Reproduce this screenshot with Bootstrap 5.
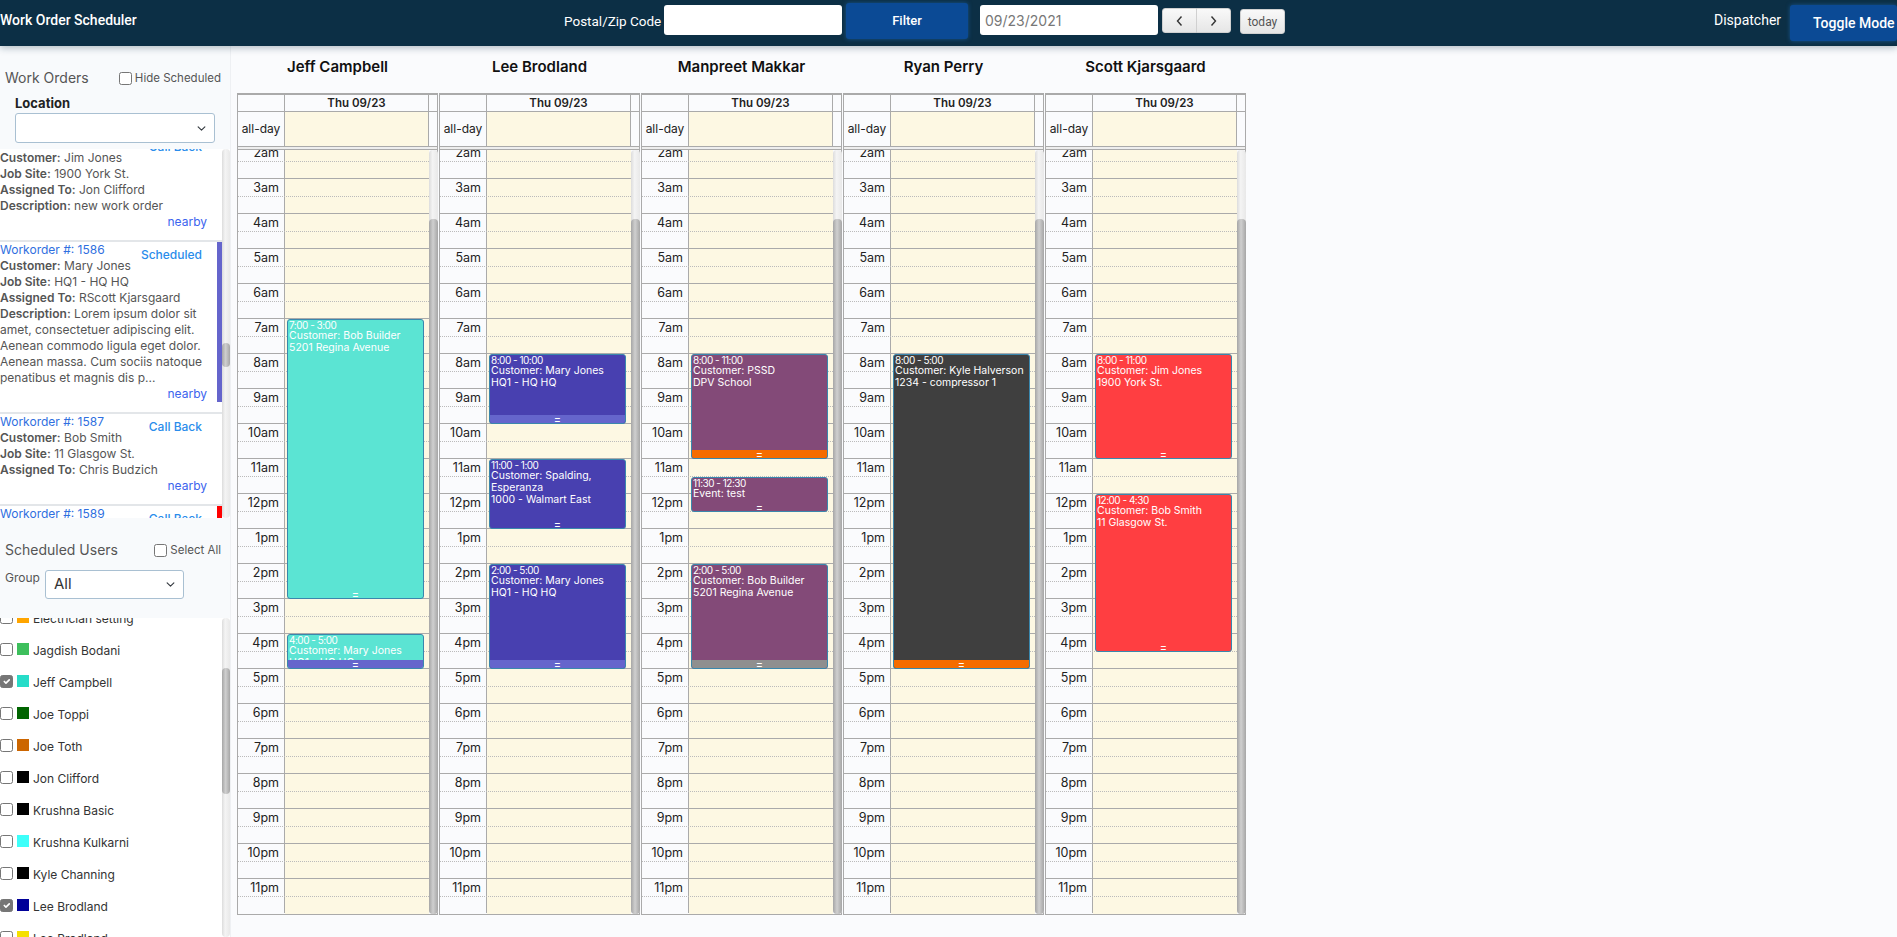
<!DOCTYPE html>
<html lang="en">
<head>
  <meta charset="UTF-8" />
  <title>Work Order Scheduler</title>
  <link href="https://cdn.jsdelivr.net/npm/bootstrap@5.3.2/dist/css/bootstrap.min.css" rel="stylesheet">
  <style>
    html, body { height: 100%; }
    body {
      background: #fafbfd;
      font-family: Inter, "Noto Sans", sans-serif;
      font-size: 12px;
      color: #555;
      overflow: hidden;
    }

    /* top bar */
    .top-bar {
      height: 46px;
      padding: 0;
      background: #0c2f45;
      color: #fff;
      font-family: Roboto, sans-serif;
      font-size: 13px;
      box-shadow: 0 2px 7px rgba(12, 47, 69, .3);
      position: relative;
      z-index: 5;
      flex-wrap: nowrap;
      justify-content: flex-start;
      align-items: flex-start;
    }
    .brand-box { width: 564px; padding-top: 12px; font-size: 14px; font-weight: 500; line-height: 16px; }
    .zip-label { width: 100px; padding-top: 13px; font-size: 13.5px; line-height: 16px; }
    .top-input {
      width: 178px; height: 30px; margin-top: 5px;
      border: 0; border-radius: 3px;
      font-family: Inter, sans-serif; font-size: 14px; color: #777;
      padding: 0 5px;
    }
    .blue-btn {
      background: #0b4a95; border: 0; border-radius: 3px; color: #fff;
      font-family: Roboto, sans-serif; font-size: 13px; font-weight: 500;
      box-shadow: 0 0 4px rgba(30, 110, 190, .6);
    }
    .blue-btn:hover { background: #0b4a95; }
    .filter-btn { width: 122px; height: 36px; margin: 3px 12px 0 4px; }
    .cal-nav { margin: 8px 9px 0 4px; }
    .cal-btn {
      height: 25px; padding: 0; color: #333; font-size: 12px;
      background: linear-gradient(#f9f9f9, #e6e6e6);
      border: 1px solid #d0d0d0; border-radius: 3px;
    }
    .cal-nav .cal-btn { width: 35px; }
    .today-btn { width: 45px; margin-top: 9px; font-family: Roboto, sans-serif; color: #555; }
    .dispatcher-box { margin-left: auto; padding-top: 12px; font-size: 14px; line-height: 16px; width: 76px; }
    .toggle-btn { width: 107px; height: 36px; margin-top: 5px; text-align: left; padding: 0 0 0 23px; font-size: 14px; }

    /* sidebar */
    .main-area { height: 891px; }
    .side-bar { width: 231px; flex: none; border-right: 1px solid #eef0f3; position: relative; }
    .side-panel { background: #f8fafc; }
    .orders-head { height: 103px; padding: 23px 5px 0; }
    .users-head { height: 100px; padding: 23px 5px 0; }
    .users-title { margin-bottom: 11px; }
    .panel-title { font-size: 14px; color: #555; line-height: 18px; }
    .check-label { font-size: 11.5px; color: #555; line-height: 14px; }
    .form-check-input.plain-check {
      width: 13px; height: 13px; margin: 0 3px 0 0; flex: none;
      border: 1px solid #767676; border-radius: 2.5px;
    }
    .form-check-input.plain-check:checked { background-color: #767676; border-color: #767676; }
    .location-label { font-weight: 700; font-size: 13px; color: #222; margin: 8px 0 2px 10px; line-height: 16px; }
    .form-select.side-select {
      border: 1px solid #a9c0d2; border-radius: 3px; background-color: #fff;
      background-size: 11px 9px; background-position: right 7px center;
      font-size: 15px; color: #333; padding: 0 0 0 8px;
    }
    .location-select { width: 200px; height: 30px; margin-left: 10px; }
    .group-select { width: 139px; height: 29px; }
    .group-label { font-size: 12px; width: 40px; margin-top: -1px; }

    .side-scroll { background: #fff; }
    .orders-list { height: 369px; }
    .users-list { height: 319px; }
    .scroll-view { flex: 1 1 auto; min-width: 0; overflow: hidden; }
    .scroll-track {
      flex: none; width: 8px;
      background: linear-gradient(90deg, #dcdcdc, #f4f4f4 40%, #e8e8e8);
      border-radius: 4px;
    }
    .scroll-thumb {
      background: linear-gradient(90deg, #a6a6a6, #cfcfcf 45%, #a6a6a6);
      border-radius: 4px;
    }
    .order-item { border-bottom: 2px solid #e3e6e9; padding-bottom: 10px; line-height: 16px; font-size: 12px; }
    .order-inner { border-right: 5px solid transparent; padding-right: 10px; position: relative; }
    .order-no { color: #2f6fe0; display: block; }
    .order-status { position: absolute; right: 15px; top: 5px; color: #2a8ceb; font-weight: 500; }
    .order-near { color: #3c64ee; text-align: right; display: block; }
    .user-row { height: 32px; display: flex; align-items: flex-start; font-size: 12px; color: #333; }
    .user-swatch { width: 12px; height: 12px; margin: 0 4px 0 1px; flex: none; }
    .user-name { line-height: 16px; }

    /* calendar */
    .cal-wrap { padding-left: 6px; gap: 1px; }
    .cal-col { width: 201px; flex: none; }
    .res-name { height: 47px; padding-top: 12px; line-height: 18px; text-align: center; font-weight: 600; font-size: 15px; color: #111; }
    .cal-frame { border-left: 1px solid #aaa; border-top: 2px solid #aaa; border-right: 1px solid #aaa; border-bottom: 1px solid #aaa; }
    .head-row { height: 17px; line-height: 16px; border-bottom: 1px solid #aaa; font-size: 11.5px; font-weight: 600; color: #222; }
    .allday-row { height: 34px; line-height: 33px; font-size: 12px; color: #222; }
    .axis-cell { width: 47px; flex: none; border-right: 1px solid #aaa; }
    .allday-row .axis-cell { text-align: center; }
    .day-cell { flex: 1 1 auto; border-right: 1px solid #aaa; text-align: center; }
    .gutter-cell { width: 8px; flex: none; }
    .cream-bg { background: #fdf8e3; }
    .head-sep { height: 4px; border-top: 1px solid #aaa; border-bottom: 1px solid #aaa; background: #eee; }
    .cal-scroll { height: 764px; }
    .cal-scroll .scroll-track { width: 9px; margin-right: -1px; }
    .cal-body { position: relative; padding-bottom: 1px; background: linear-gradient(90deg, transparent 47px, #fdf8e3 47px); }
    .hour-row { height: 35px; border-top: 1px solid #aaa; position: relative; display: flex; }
    .hour-row::after { content: ""; position: absolute; left: 0; right: 0; top: 17px; border-top: 1px dotted #bbb; }
    .hour-label { width: 47px; flex: none; border-right: 1px solid #aaa; text-align: right; padding: 1px 5px 0 0; font-size: 12.5px; line-height: 16px; color: #222; }
    .hour-fill { flex: 1 1 auto; }
    .cal-event {
      position: absolute; left: 49px; right: 5px;
      border: 1px solid #3a87ad; border-radius: 3px;
      color: #fff; font-size: 10.5px; line-height: 12px; overflow: hidden; z-index: 2;
    }
    .ev-time { font-size: 10px; letter-spacing: -.5px; line-height: 10px; padding-left: 1px; }
    .ev-line { padding-left: 1px; }
    .ev-handle {
      position: absolute; left: 0; right: 0; bottom: 0; height: 8px;
      text-align: center; font-size: 11px; line-height: 8px; color: #fff;
    }
  </style>
</head>
<body>

  <!-- TOP BAR -->
  <nav class="navbar top-bar">
    <div class="brand-box">Work Order Scheduler</div>
    <div class="zip-label">Postal/Zip Code</div>
    <input class="top-input" type="text">
    <button class="btn blue-btn filter-btn">Filter</button>
    <input class="top-input" type="text" value="09/23/2021">
    <div class="btn-group cal-nav">
      <button class="btn cal-btn" aria-label="prev"><svg width="9" height="12" viewBox="0 0 9 12"><path d="M6.500 1.500 2.500 6l4 4.500" fill="none" stroke="#333" stroke-width="1.400"/></svg></button>
      <button class="btn cal-btn" aria-label="next"><svg width="9" height="12" viewBox="0 0 9 12"><path d="M2.500 1.500 6.500 6l-4 4.500" fill="none" stroke="#333" stroke-width="1.400"/></svg></button>
    </div>
    <button class="btn cal-btn today-btn">today</button>
    <div class="dispatcher-box">Dispatcher</div>
    <button class="btn blue-btn toggle-btn">Toggle Mode</button>
  </nav>

  <div class="d-flex main-area">

    <!-- SIDEBAR -->
    <aside class="side-bar">
      <div class="side-panel orders-head">
        <div class="d-flex align-items-center justify-content-between">
          <span class="panel-title">Work Orders</span>
          <label class="d-flex align-items-center check-label me-1"><input class="form-check-input plain-check" type="checkbox">Hide Scheduled</label>
        </div>
        <div class="location-label">Location</div>
        <select class="form-select side-select location-select"><option></option></select>
      </div>
      <div class="d-flex side-scroll orders-list">
        <div class="scroll-view" id="ordersList"></div>
        <div class="scroll-track"><div class="scroll-thumb" style="margin-top:194px;height:24px"></div></div>
      </div>

      <div class="side-panel users-head">
        <div class="d-flex align-items-center justify-content-between users-title">
          <span class="panel-title">Scheduled Users</span>
          <label class="d-flex align-items-center check-label me-1"><input class="form-check-input plain-check" type="checkbox">Select All</label>
        </div>
        <div class="d-flex align-items-start">
          <span class="group-label">Group</span>
          <select class="form-select side-select group-select"><option>All</option></select>
        </div>
      </div>
      <div class="d-flex side-scroll users-list">
        <div class="scroll-view" id="usersList"></div>
        <div class="scroll-track"><div class="scroll-thumb" style="margin-top:50px;height:126px"></div></div>
      </div>
    </aside>

    <!-- CALENDAR COLUMNS -->
    <section class="d-flex cal-wrap" id="calWrap"></section>
  </div>

  <script src="https://cdn.jsdelivr.net/npm/bootstrap@5.3.2/dist/js/bootstrap.bundle.min.js"></script>
  <script>
    (() => {
      const orders = [
        { no: 1585, status: 'Call Back', lines: [['Customer', 'Jim Jones'], ['Job Site', '1900 York St.'], ['Assigned To', 'Jon Clifford'], ['Description', 'new work order']], bar: 'transparent' },
        { no: 1586, status: 'Scheduled', lines: [['Customer', 'Mary Jones'], ['Job Site', 'HQ1 - HQ HQ'], ['Assigned To', 'RScott Kjarsgaard'], ['Description', 'Lorem ipsum dolor sit amet, consectetuer adipiscing elit. Aenean commodo ligula eget dolor. Aenean massa. Cum sociis natoque penatibus et magnis dis p...']], bar: '#6565cc' },
        { no: 1587, status: 'Call Back', lines: [['Customer', 'Bob Smith'], ['Job Site', '11 Glasgow St.'], ['Assigned To', 'Chris Budzich']], bar: 'transparent' },
        { no: 1589, status: 'Call Back', lines: [['Customer', 'Bob Smith'], ['Job Site', '11 Glasgow St.']], bar: '#ff0000' }
      ];

      const users = [
        ['Electrician setting', '#ffa500', false], ['Jagdish Bodani', '#3dbf5c', false], ['Jeff Campbell', '#26dcc8', true],
        ['Joe Toppi', '#006400', false], ['Joe Toth', '#cc6600', false], ['Jon Clifford', '#000000', false],
        ['Krushna Basic', '#000000', false], ['Krushna Kulkarni', '#3dfffa', false], ['Kyle Channing', '#000000', false],
        ['Lee Brodland', '#000099', true], ['Lee Brodland', '#f5e000', false]
      ];

      const TEAL = '#5be4d3', PURPLE = '#4840b0', PLUM = '#834a78', DARK = '#3f3f3f', RED = '#ff3e41';
      const columns = [
        { name: 'Jeff Campbell', events: [
          { from: 7, to: 15, time: '7:00 - 3:00', lines: ['Customer: Bob Builder', '5201 Regina Avenue'], bg: TEAL },
          { from: 16, to: 17, time: '4:00 - 5:00', lines: ['Customer: Mary Jones', 'HQ1 - HQ HQ'], bg: TEAL, bar: '#6565cc' }
        ] },
        { name: 'Lee Brodland', events: [
          { from: 8, to: 10, time: '8:00 - 10:00', lines: ['Customer: Mary Jones', 'HQ1 - HQ HQ'], bg: PURPLE, bar: '#6565cc' },
          { from: 11, to: 13, time: '11:00 - 1:00', lines: ['Customer: Spalding, Esperanza', '1000 - Walmart East'], bg: PURPLE },
          { from: 14, to: 17, time: '2:00 - 5:00', lines: ['Customer: Mary Jones', 'HQ1 - HQ HQ'], bg: PURPLE, bar: '#6565cc' }
        ] },
        { name: 'Manpreet Makkar', events: [
          { from: 8, to: 11, time: '8:00 - 11:00', lines: ['Customer: PSSD', 'DPV School'], bg: PLUM, bar: '#f56c00' },
          { from: 11.5, to: 12.5, time: '11:30 - 12:30', lines: ['Event: test'], bg: PLUM },
          { from: 14, to: 17, time: '2:00 - 5:00', lines: ['Customer: Bob Builder', '5201 Regina Avenue'], bg: PLUM, bar: '#8f8f8f' }
        ] },
        { name: 'Ryan Perry', events: [
          { from: 8, to: 17, time: '8:00 - 5:00', lines: ['Customer: Kyle Halverson', '1234 - compressor 1'], bg: DARK, bar: '#f56c00' }
        ] },
        { name: 'Scott Kjarsgaard', events: [
          { from: 8, to: 11, time: '8:00 - 11:00', lines: ['Customer: Jim Jones', '1900 York St.'], bg: RED },
          { from: 12, to: 16.5, time: '12:00 - 4:30', lines: ['Customer: Bob Smith', '11 Glasgow St.'], bg: RED }
        ] }
      ];

      const hourName = h => (h % 12 || 12) + (h < 12 ? 'am' : 'pm');

      // the lists sit part way down in the picture, so scroll them there
      const ordersList = document.getElementById('ordersList');
      ordersList.innerHTML = '<div style="height:200px"></div>' + orders.map(o => `
        <div class="order-item">
          <div class="order-inner" style="border-right-color:${o.bar}">
            <span class="order-no">Workorder #: ${o.no}</span>
            <span class="order-status">${o.status}</span>
            ${o.lines.map(l => `<div><b class="fw-semibold">${l[0]}:</b> ${l[1]}</div>`).join('')}
            <span class="order-near">nearby</span>
          </div>
        </div>`).join('') + '<div style="height:200px"></div>';
      ordersList.scrollTop = 215;

      const usersList = document.getElementById('usersList');
      usersList.innerHTML = '<div style="height:120px"></div>' + users.map(u => `
        <div class="user-row">
          <input class="form-check-input plain-check" type="checkbox" ${u[2] ? 'checked' : ''}>
          <span class="user-swatch" style="background:${u[1]}"></span>
          <span class="user-name">${u[0]}</span>
        </div>`).join('') + '<div style="height:200px"></div>';
      usersList.scrollTop = 127;

      // calendar columns
      const calWrap = document.getElementById('calWrap');
      let hours = '';
      for (let h = 0; h < 24; h++) {
        hours += `<div class="hour-row"><div class="hour-label">${hourName(h)}</div><div class="hour-fill"></div></div>`;
      }
      calWrap.innerHTML = columns.map(c => `
        <div class="cal-col">
          <div class="res-name">${c.name}</div>
          <div class="cal-frame">
            <div class="d-flex head-row">
              <div class="axis-cell"></div><div class="day-cell">Thu 09/23</div><div class="gutter-cell"></div>
            </div>
            <div class="d-flex allday-row">
              <div class="axis-cell">all-day</div><div class="day-cell cream-bg"></div><div class="gutter-cell"></div>
            </div>
            <div class="head-sep"></div>
            <div class="d-flex cal-scroll">
              <div class="scroll-view">
                <div class="cal-body">
                  ${hours}
                  ${c.events.map(e => `
                    <div class="cal-event" style="top:${e.from * 35 + 1}px;height:${(e.to - e.from) * 35}px;background:${e.bg}">
                      <div class="ev-time">${e.time}</div>
                      <div class="ev-line">${e.lines.map(t => `<div>${t}</div>`).join('')}</div>
                      <div class="ev-handle" style="background:${e.bar || 'transparent'}">=</div>
                    </div>`).join('')}
                </div>
              </div>
              <div class="scroll-track"><div class="scroll-thumb" style="margin-top:69px;height:695px"></div></div>
            </div>
          </div>
        </div>`).join('');
      document.querySelectorAll('.cal-scroll .scroll-view').forEach(el => { el.scrollTop = 77; });
    })();
  </script>

</body>
</html>
